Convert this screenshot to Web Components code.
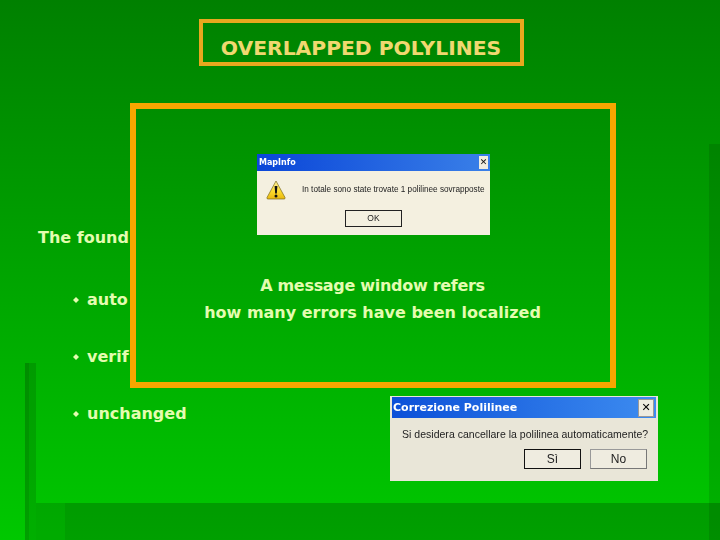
<!DOCTYPE html>
<html><head><meta charset="utf-8"><style>
html,body{margin:0;padding:0;width:720px;height:540px;overflow:hidden}
</style></head><body>
<slide-page>
  <slide-title slot="title">OVERLAPPED POLYLINES</slide-title>
  <p-text slot="body">The found</p-text>
  <bullet-item slot="body">auto</bullet-item>
  <bullet-item slot="body">verif</bullet-item>
  <bullet-item slot="body">unchanged</bullet-item>
  <callout-box slot="over">
    <info-dialog></info-dialog>
    <span slot="caption"><span style="letter-spacing:-.3px">A message window refers</span><br>how many errors have been localized</span>
  </callout-box>
  <confirm-dialog slot="over"></confirm-dialog>
</slide-page>
<script>
function def(name, html){
  customElements.define(name, class extends HTMLElement{
    constructor(){super();this.attachShadow({mode:'open'}).innerHTML=html;}
  });
}
const FONT = '"DejaVu Sans","Liberation Sans",sans-serif';
def('slide-page', `<style>
:host{display:block;position:relative;width:720px;height:540px;overflow:hidden;
  background:linear-gradient(180deg,#008000 0%,#00c800 100%);font-family:${FONT}}
.deco{position:absolute}
.r{left:709px;top:144px;width:11px;height:396px;background:rgba(0,0,0,.1)}
.b1{left:65px;top:503px;width:655px;height:37px;background:rgba(0,0,0,.2)}
.b2{left:36px;top:503px;width:29px;height:37px;background:rgba(0,0,0,.14)}
.l1{left:25px;top:363px;width:4px;height:177px;background:rgba(0,0,0,.2)}
.l2{left:29px;top:363px;width:7px;height:177px;background:rgba(0,0,0,.12)}
.t{position:relative;display:flex;justify-content:center;padding:19px 0 0 2px;height:47px}
.body{position:relative;margin-top:159px;padding-left:38px;display:flex;flex-direction:column}
</style>
<div class="deco r"></div><div class="deco b1"></div><div class="deco b2"></div><div class="deco l1"></div><div class="deco l2"></div>
<div class="t"><slot name="title"></slot></div>
<div class="body"><slot name="body"></slot></div>
<slot name="over"></slot>`);
def('slide-title', `<style>
:host{display:flex;align-items:center;justify-content:center;box-sizing:border-box;width:325px;height:47px;border:4px solid #e7a81e;
 color:#f0d870;font-weight:bold;font-size:20.3px;padding-top:10px}
</style><slot></slot>`);
def('p-text', `<style>:host{display:block;height:26px;line-height:26px;color:#e4fcb0;font-weight:bold;font-size:16px;margin-bottom:36px}</style><slot></slot>`);
def('bullet-item', `<style>:host{display:flex;align-items:center;height:26px;line-height:26px;color:#e4fcb0;font-weight:bold;font-size:16px;margin-left:35px;margin-bottom:31px;gap:8px}
svg{width:6px;height:6px;flex:none}</style><svg viewBox="0 0 6 6"><path d="M3 0L6 3L3 6L0 3Z" fill="#e4fcb0"/></svg><slot></slot>`);
def('callout-box', `<style>
:host{position:absolute;left:130px;top:103px;width:486px;height:285px;box-sizing:border-box;border:6px solid #f7a600;background:linear-gradient(180deg,#008e00,#00b300);
 display:flex;flex-direction:column;align-items:center}
.d{margin-top:45px;margin-left:1px}
.c{margin-top:37px;text-align:center;color:#e4fcb0;font-size:16px;line-height:27px;font-weight:bold;margin-left:-1px}
</style><div class="d"><slot></slot></div><div class="c"><slot name="caption"></slot></div>`);
def('info-dialog', `<style>
:host{display:flex;flex-direction:column;width:233px;height:81px;background:#f4f0e0;font-family:"Liberation Sans",sans-serif;color:#222;filter:blur(.35px)}
.bar{height:17px;background:linear-gradient(90deg,#0a46d8,#3a80e8);display:flex;align-items:center;justify-content:space-between;padding:0 1px 0 2px;color:#fff;font-weight:bold;font-size:8px;font-family:"DejaVu Sans",sans-serif}
.x{width:9px;height:13px;background:#f0ede0;color:#111;font-size:9px;line-height:13px;text-align:center;margin-right:1px}
.m{display:flex;align-items:center;padding:6px 5px 0 9px;gap:16px;font-size:8.2px;white-space:nowrap;height:25px}
svg{width:20px;height:20px;flex:none}
.k{align-self:center;margin-top:8px;width:57px;height:17px;border:1px solid #222;box-sizing:border-box;text-align:center;font-size:8.5px;line-height:15px}
</style><div class="bar"><span>MapInfo</span><span class="x">✕</span></div>
<div class="m"><svg viewBox="0 0 20 20"><defs><linearGradient id="y" x1="0" y1="0" x2="0" y2="1"><stop offset="0" stop-color="#fff2a0"/><stop offset=".6" stop-color="#fbd92a"/><stop offset="1" stop-color="#e9b810"/></linearGradient></defs><path d="M10 1L19 17.5Q19.5 19 18 19H2Q.5 19 1 17.5Z" fill="url(#y)" stroke="#7a6a20" stroke-width=".7"/><path d="M8.6 6H11.4L10.8 13.5H9.2Z" fill="#111"/><circle cx="10" cy="16" r="1.5" fill="#111"/></svg><span>In totale sono state trovate 1 polilinee sovrapposte</span></div>
<div class="k">OK</div>`);
def('confirm-dialog', `<style>
:host{position:absolute;left:390px;top:396px;width:268px;height:85px;box-sizing:border-box;background:#e9e6d8;font-family:"Liberation Sans",sans-serif;color:#222;display:flex;flex-direction:column;padding:1px 2px;filter:blur(.25px)}
.bar{height:21px;background:linear-gradient(90deg,#0c50d8,#3d8cf0);display:flex;align-items:center;justify-content:space-between;padding:0 0 0 1px;color:#fff;font-weight:bold;font-size:11px;font-family:"DejaVu Sans",sans-serif}
.x{width:16px;height:18px;background:#efece0;border:1px solid #999;box-sizing:border-box;color:#000;font-size:11px;font-weight:bold;line-height:16px;text-align:center;margin-right:2px}
.m{padding:9px 0 0 10px;font-size:10.5px;line-height:14px;white-space:nowrap;letter-spacing:.02px}
.btns{display:flex;justify-content:flex-end;gap:9px;padding:8px 9px 0 0}
.k{width:57px;height:20px;box-sizing:border-box;border:1px solid #999;border-right-color:#777;border-bottom-color:#777;text-align:center;font-size:12px;line-height:18px;background:#efece0}
.k.d{border:1px solid #111}
</style><div class="bar"><span>Correzione Polilinee</span><span class="x">✕</span></div>
<div class="m">Si desidera cancellare la polilinea automaticamente?</div>
<div class="btns"><div class="k d">Sì</div><div class="k">No</div></div>`);
</script>
</body></html>
